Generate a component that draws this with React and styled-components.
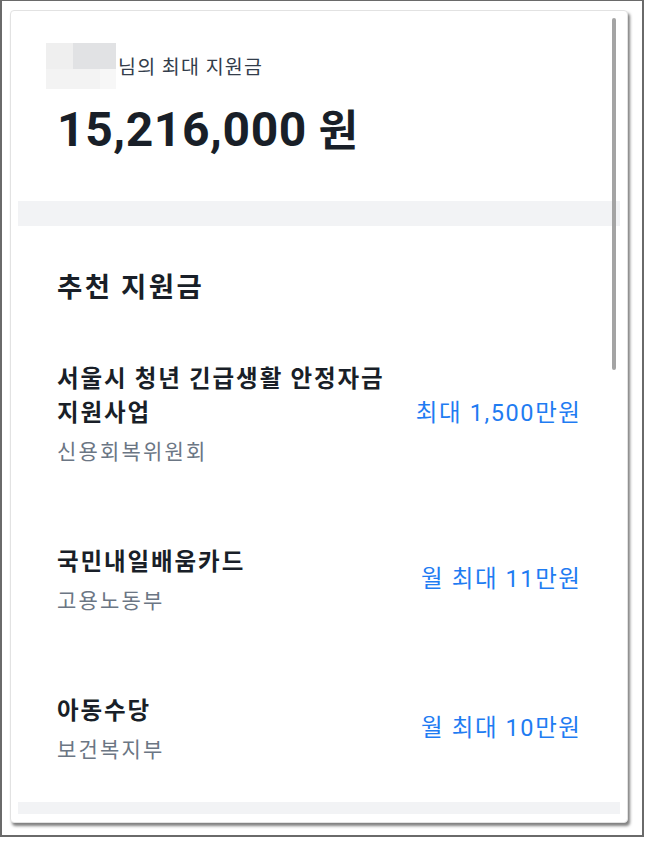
import React from "react";
import styled, { createGlobalStyle } from "styled-components";

const GlobalStyle = createGlobalStyle`
  html, body {
    margin: 0;
    padding: 0;
    background: #ffffff;
  }
  body {
    font-family: "Noto Sans CJK KR", "Noto Sans", sans-serif;
    -webkit-font-smoothing: antialiased;
    word-break: keep-all;
  }
  * { box-sizing: border-box; }
`;

const Frame = styled.div`
  width: 644px;
  height: 837px;
  border: 1px solid #6a6a6a;
  border-left-width: 2px;
  border-right-width: 2px;
  border-bottom-width: 2px;
  padding: 9px 0 0 8px;
  background: #ffffff;
`;

const Card = styled.div`
  position: relative;
  width: 618px;
  height: 813px;
  border: 1px solid #e2e2e2;
  border-radius: 4px;
  padding: 7px 7px 8px 7px;
  background: #ffffff;
  box-shadow: 2px 3px 3px rgba(0, 0, 0, 0.5);
`;

const Viewport = styled.div`
  position: relative;
  height: 796px;
  overflow: hidden;
`;

const ScrollThumb = styled.div`
  position: absolute;
  top: 0;
  right: 4px;
  width: 4px;
  height: 352px;
  border-radius: 2px;
  background: #a4a4a4;
`;

const Header = styled.section`
  padding: 25px 0 43px 39px;
`;

const NameRow = styled.div`
  display: flex;
  align-items: center;
  gap: 2px;
  margin-left: -11px;
  height: 46px;
`;

const NameBlur = styled.div`
  display: grid;
  grid-template-columns: 27px 27px 16px;
  grid-template-rows: 26px 20px;
  width: 70px;
  height: 46px;
`;

const BlurCell = styled.div`
  background: ${(p) => p.$c};
  grid-column: ${(p) => p.$col || "auto"};
`;

const NameLabel = styled.span`
  font-size: 19.5px;
  line-height: 28px;
  color: #333d4b;
  letter-spacing: 1.2px;
`;

const Amount = styled.div`
  margin-top: 10px;
  font-family: "Roboto", "Noto Sans CJK KR", sans-serif;
  font-weight: 700;
  font-size: 48px;
  line-height: 56px;
  letter-spacing: 0.6px;
  color: #191f28;
`;

const Won = styled.span`
  font-family: "Noto Sans CJK KR", sans-serif;
  font-size: 43px;
  letter-spacing: 0;
  margin-left: -1px;
`;

const Divider = styled.div`
  height: ${(p) => p.$h}px;
  background: #f2f3f5;
`;

const Recommend = styled.section`
  padding: 39px 40px 0 39px;
`;

const SectionTitle = styled.h2`
  margin: 0;
  font-size: 27.5px;
  line-height: 40px;
  font-weight: 700;
  color: #191f28;
  letter-spacing: 2.4px;
`;

const List = styled.ul`
  list-style: none;
  margin: 16px 0 0 0;
  padding: 0;
`;

const Item = styled.li`
  display: flex;
  align-items: center;
  gap: 24px;
  padding: 39px 0;
`;

const ItemInfo = styled.div`
  flex: 1;
  min-width: 0;
  display: flex;
  flex-direction: column;
  gap: 7px;
`;

const ItemTitle = styled.div`
  font-size: 23.5px;
  line-height: 34px;
  font-weight: 700;
  color: #191f28;
  letter-spacing: 1.9px;
`;

const ItemOrg = styled.div`
  font-size: 21px;
  line-height: 30px;
  color: #6b7684;
  letter-spacing: 2.2px;
`;

const ItemValue = styled.div`
  flex-shrink: 0;
  font-family: "Roboto", "Noto Sans CJK KR", sans-serif;
  font-size: 23.5px;
  line-height: 34px;
  color: #1f7cf2;
  letter-spacing: 1.6px;
  margin-right: -1.6px;
`;

const items = [
  { title: "서울시 청년 긴급생활 안정자금 지원사업", org: "신용회복위원회", value: "최대 1,500만원" },
  { title: "국민내일배움카드", org: "고용노동부", value: "월 최대 11만원" },
  { title: "아동수당", org: "보건복지부", value: "월 최대 10만원" },
];

export default function App() {
  return (
    <>
      <GlobalStyle />
      <Frame>
        <Card>
          <Viewport>
            <Header>
              <NameRow>
                <NameBlur aria-hidden="true">
                  <BlurCell $c="#efefef" />
                  <BlurCell $c="#e1e2e4" $col="span 2" />
                  <BlurCell $c="#f3f3f3" $col="span 2" />
                  <BlurCell $c="#f7f7f7" />
                </NameBlur>
                <NameLabel>님의 최대 지원금</NameLabel>
              </NameRow>
              <Amount>
                15,216,000 <Won>원</Won>
              </Amount>
            </Header>
            <Divider $h={25} />
            <Recommend>
              <SectionTitle>추천 지원금</SectionTitle>
              <List>
                {items.map((it) => (
                  <Item key={it.title}>
                    <ItemInfo>
                      <ItemTitle>{it.title}</ItemTitle>
                      <ItemOrg>{it.org}</ItemOrg>
                    </ItemInfo>
                    <ItemValue>{it.value}</ItemValue>
                  </Item>
                ))}
              </List>
            </Recommend>
            <Divider $h={25} />
            <ScrollThumb />
          </Viewport>
        </Card>
      </Frame>
    </>
  );
}
